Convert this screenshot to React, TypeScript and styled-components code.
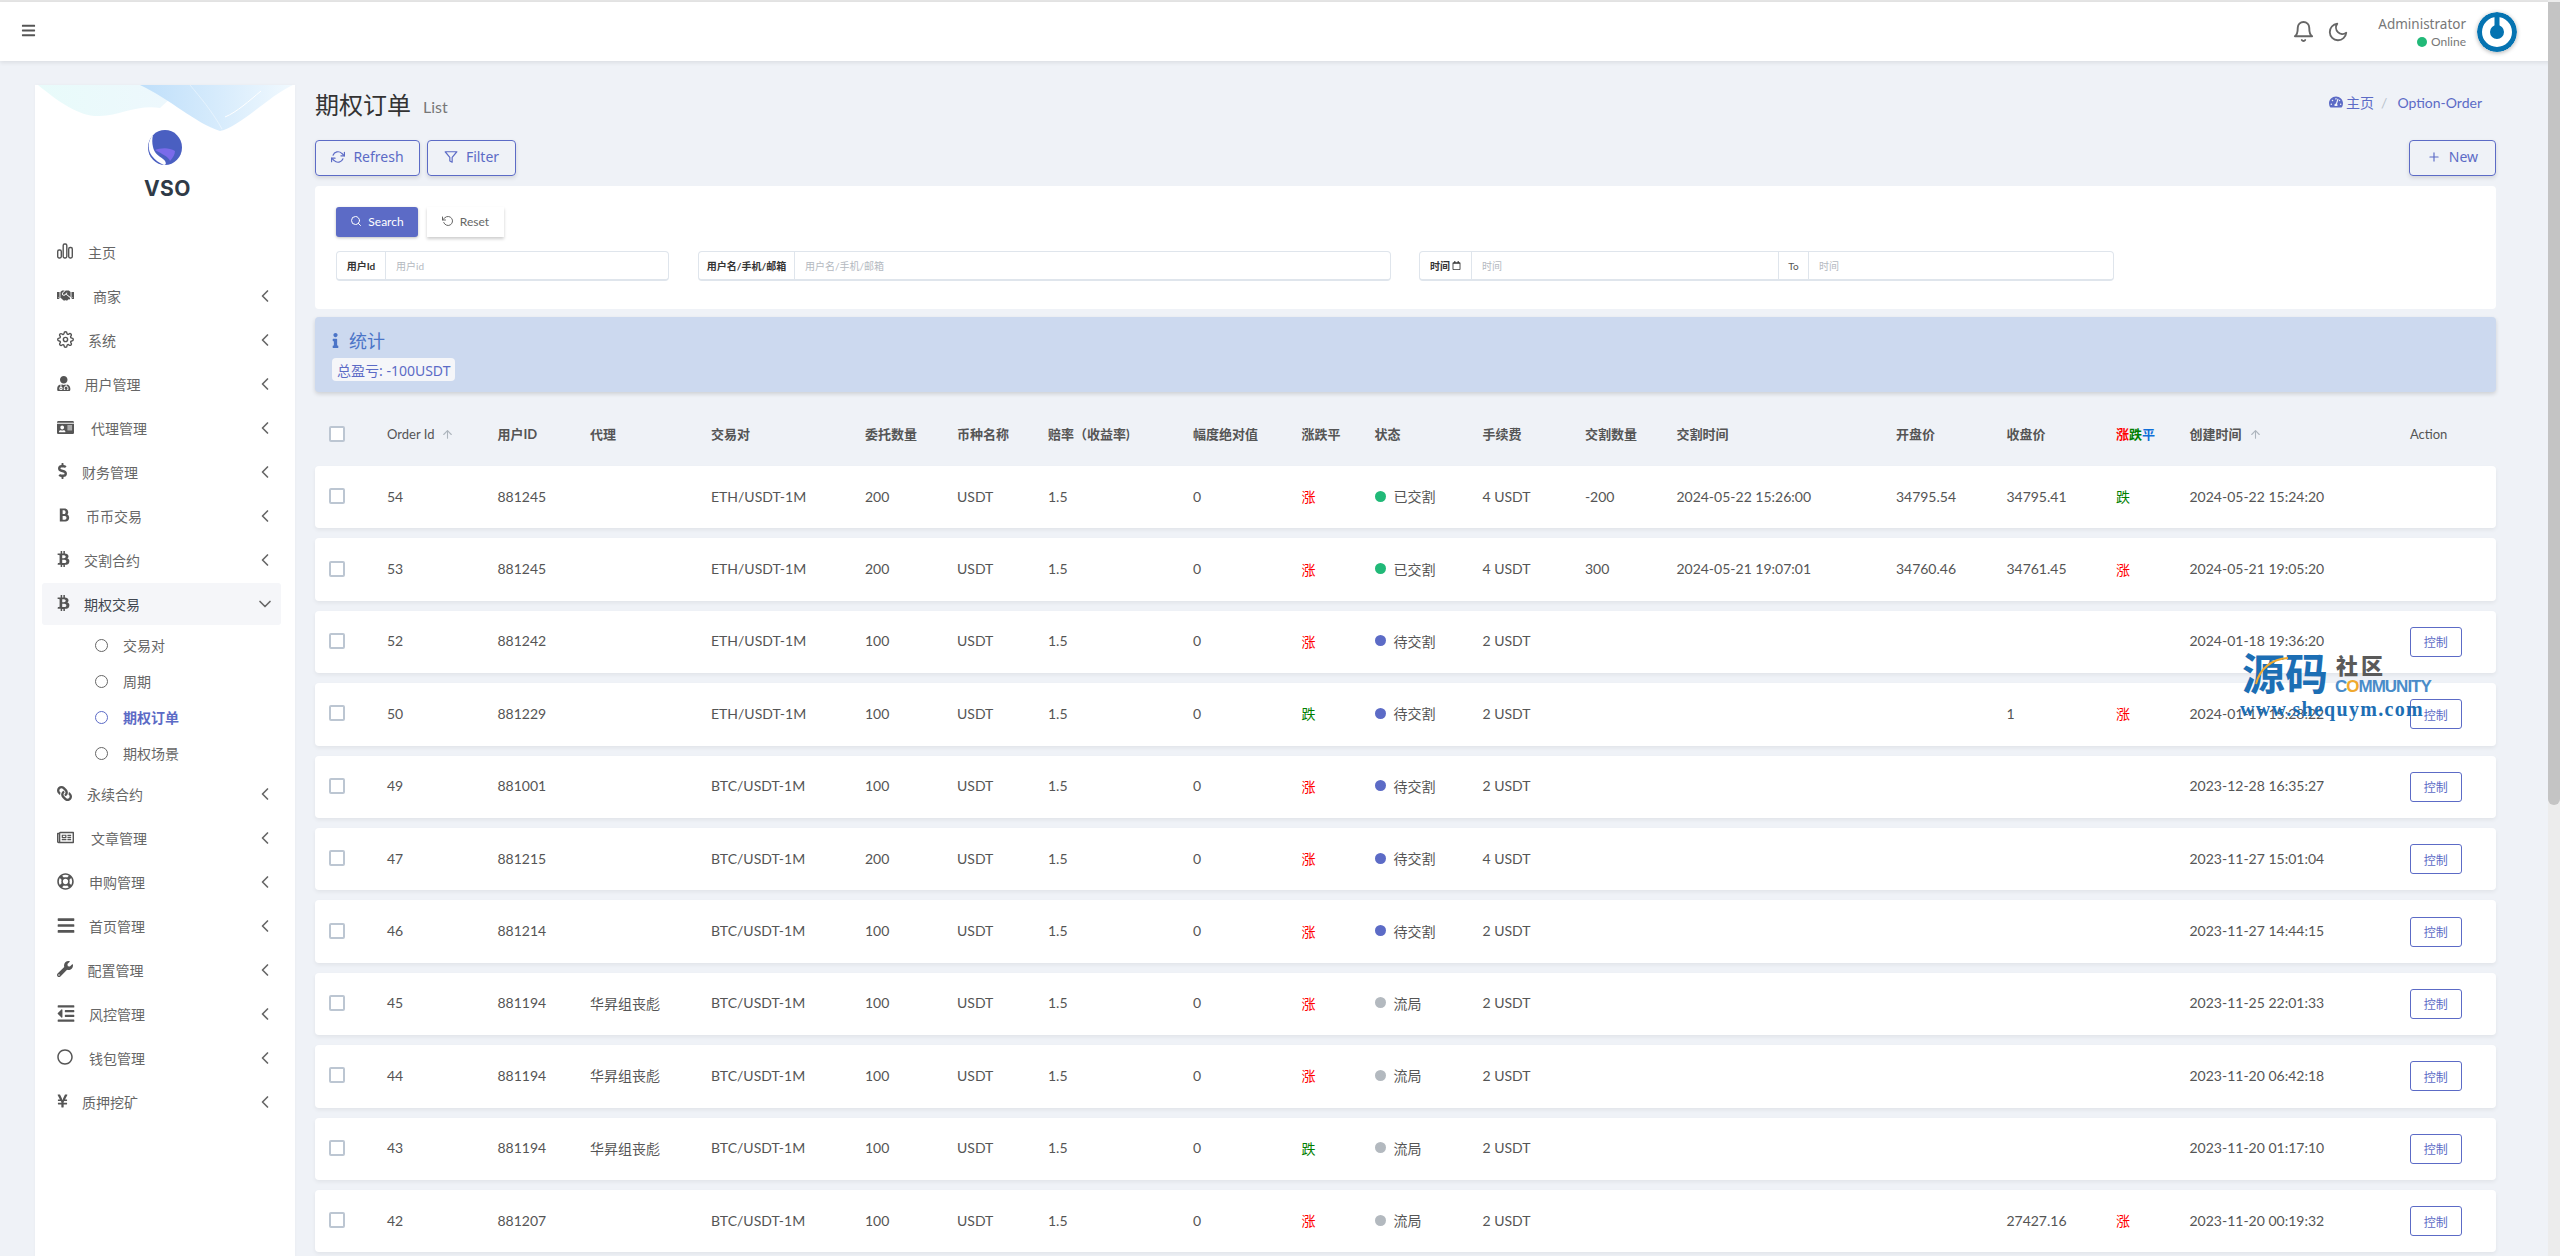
import React from 'react'
import styled, { createGlobalStyle } from 'styled-components'
import {
  FaBars,
  FaBtc,
  FaDollarSign,
  FaHandshake,
  FaIdCard,
  FaInfo,
  FaLink,
  FaRegCircle,
  FaRegLifeRing,
  FaRegNewspaper,
  FaOutdent,
  FaTachometerAlt,
  FaUserMd,
  FaWrench,
  FaYenSign,
  FaRegCalendar,
} from 'react-icons/fa'
import {
  FiArrowUp,
  FiBell,
  FiChevronDown,
  FiChevronLeft,
  FiFilter,
  FiMoon,
  FiPlus,
  FiRefreshCw,
  FiRotateCcw,
  FiSearch,
  FiSettings,
} from 'react-icons/fi'
import { ImBold } from 'react-icons/im'

const PRIMARY = '#5c6bc6'
const FONT = `"Lato", "Noto Sans CJK SC", sans-serif`
const WIDE_FONT = `"Noto Sans", "Noto Sans CJK SC", sans-serif`

const GlobalStyle = createGlobalStyle`
  html, body {
    margin: 0;
    padding: 0;
    background: #eff2f7;
    font-family: ${FONT};
    color: #414750;
  }
`

const Page = styled.div`
  position: relative;
  border-top: 2px solid #e4e4e4;
`

const ScrollTrack = styled.div`
  position: fixed;
  top: 0;
  right: 0;
  bottom: 0;
  width: 12px;
  padding-top: 2px;
  box-sizing: border-box;
  background: #ececec;
  z-index: 5;
`

const ScrollThumb = styled.div`
  height: 803px;
  background: #c4c4c4;
  border-radius: 0 0 6px 6px;
`

const TopBar = styled.header`
  height: 59px;
  background: #fff;
  box-shadow: 0 2px 4px rgba(0, 0, 0, 0.08);
  display: flex;
  align-items: center;
  padding: 0 43px 0 21px;
  position: relative;
  z-index: 2;
`

const BurgerIcon = styled(FaBars)`
  width: 15px;
  height: 15px;
  color: #555;
  margin-top: -2px;
`

const TopRight = styled.div`
  margin-left: auto;
  display: flex;
  align-items: center;
`

const TopIcon = styled.span<{ $gap: number; $size: number }>`
  display: flex;
  color: #666;
  font-size: ${({ $size }) => $size}px;
  margin-right: ${({ $gap }) => $gap}px;
`

const UserInfo = styled.div`
  display: flex;
  flex-direction: column;
  align-items: flex-end;
  margin-right: 11px;
`

const UserName = styled.span`
  font-family: ${WIDE_FONT};
  font-size: 13.5px;
  line-height: 20px;
  color: #777;
`

const UserStatus = styled.span`
  display: flex;
  align-items: center;
  gap: 4px;
  font-size: 12px;
  line-height: 16px;
  color: #777;
`

const OnlineDot = styled.i`
  width: 10px;
  height: 10px;
  border-radius: 50%;
  background: #21b978;
`

const Avatar = styled.svg`
  width: 40px;
  height: 40px;
  border-radius: 50%;
  box-shadow: 0 1px 4px rgba(0, 0, 0, 0.3);
`

const Body = styled.div`
  display: flex;
  align-items: stretch;
`

const Sidebar = styled.aside`
  width: 260px;
  flex-shrink: 0;
  margin: 24px 20px 0 35px;
  background: #fff;
  box-shadow: 0 0 4px rgba(0, 0, 0, 0.03);
  position: relative;
  overflow: hidden;
`

const Wave = styled.svg`
  position: absolute;
  left: 0;
  top: 0;
  width: 260px;
  height: 50px;
`

const Brand = styled.div`
  display: flex;
  flex-direction: column;
  align-items: center;
  padding-top: 45px;
  height: 145px;
  box-sizing: border-box;
`

const BrandName = styled.div`
  font-family: "Inter", sans-serif;
  font-size: 21px;
  font-weight: 700;
  line-height: 24px;
  margin: 12px 0 0 5px;
  color: #2f3a47;
  letter-spacing: 0.5px;
`

const Menu = styled.nav`
  padding: 0 14px 0 7px;
  margin-top: 1px;
`

const MenuItem = styled.div<{ $active?: boolean }>`
  height: 42px;
  margin-bottom: 2px;
  display: flex;
  align-items: center;
  padding: 0 6px 0 15px;
  font-size: 14px;
  color: ${({ $active }) => ($active ? '#414750' : '#666')};
  background: ${({ $active }) => ($active ? '#f5f6f9' : 'transparent')};
  border-radius: 3px;
`

const MenuIcon = styled.span<{ $box: number; $size: number }>`
  display: flex;
  width: ${({ $box }) => $box}px;
  font-size: ${({ $size }) => $size}px;
  margin-right: 14px;
  margin-top: -2px;
  color: #555;

  svg {
    width: auto;
    height: 1em;
  }
`

const Chevron = styled.span`
  margin-left: auto;
  display: flex;
  font-size: 20px;
  color: #666;
`

const SubMenu = styled.div`
  padding: 0 0 0 53px;
  margin: 0 0 2px;
`

const SubItem = styled.div<{ $active?: boolean }>`
  height: 36px;
  display: flex;
  align-items: center;
  gap: 15px;
  font-size: 14px;
  color: ${({ $active }) => ($active ? PRIMARY : '#666')};
  font-weight: ${({ $active }) => ($active ? 700 : 400)};
`

const SubDot = styled.i<{ $active?: boolean }>`
  width: 13px;
  height: 13px;
  box-sizing: border-box;
  border-radius: 50%;
  border: 1.5px solid ${({ $active }) => ($active ? PRIMARY : '#666')};
`

const MirroredLink = styled(FaLink)`
  transform: scaleX(-1);
`

const Main = styled.main`
  width: 2181px;
  flex-shrink: 0;
  padding: 31px 0 20px;
`

const TitleRow = styled.div`
  display: flex;
  align-items: flex-end;
  height: 25px;
`

const Title = styled.h1`
  margin: 0;
  font-size: 24px;
  font-weight: 400;
  line-height: 25px;
  color: #333;
`

const SubTitle = styled.span`
  margin-left: 12px;
  font-size: 16px;
  line-height: 20px;
  color: #777;
`

const Crumbs = styled.div`
  margin-left: auto;
  margin-right: 14px;
  margin-bottom: 5px;
  display: flex;
  align-items: center;
  gap: 3px;
  font-size: 14px;
  color: ${PRIMARY};
  align-self: center;
`

const CrumbSlash = styled.span`
  color: #b9c3cd;
  margin: 0 7px 0 4px;
`

const Toolbar = styled.div`
  display: flex;
  gap: 7px;
  margin-top: 23px;
`

const OutlineButton = styled.button<{ $width: number; $push?: boolean }>`
  width: ${({ $width }) => $width}px;
  height: 36px;
  box-sizing: border-box;
  border: 1px solid ${PRIMARY};
  border-radius: 4px;
  background: transparent;
  color: ${PRIMARY};
  font: 14px ${WIDE_FONT};
  display: flex;
  align-items: center;
  justify-content: center;
  gap: 8px;
  padding: 0 0 3px;
  box-shadow: 0 2px 4px rgba(0, 0, 0, 0.12);
  margin-left: ${({ $push }) => ($push ? 'auto' : '0')};
`

const FilterCard = styled.section`
  margin-top: 10px;
  height: 123px;
  box-sizing: border-box;
  padding: 21px;
  background: #fff;
  border-radius: 4px;
`

const FilterActions = styled.div`
  display: flex;
  gap: 9px;
`

const SearchButton = styled.button`
  width: 82px;
  height: 30px;
  border: 0;
  border-radius: 3px;
  background: ${PRIMARY};
  color: #fff;
  font: 12px ${FONT};
  display: flex;
  align-items: center;
  justify-content: center;
  gap: 6px;
  padding: 0 0 2px;
  box-shadow: 0 1px 3px rgba(0, 0, 0, 0.25);
`

const ResetButton = styled.button`
  width: 77px;
  height: 30px;
  border: 0;
  background: #fff;
  color: #666;
  font: 12px ${FONT};
  display: flex;
  align-items: center;
  justify-content: center;
  gap: 6px;
  padding: 0 0 2px;
  box-shadow: 0 2px 3px rgba(0, 0, 0, 0.2);
`

const FilterFields = styled.div`
  display: flex;
  margin-top: 14px;
`

const InputGroup = styled.div<{ $width: number; $gap: number }>`
  width: ${({ $width }) => $width}px;
  margin-right: ${({ $gap }) => $gap}px;
  height: 30px;
  box-sizing: border-box;
  border: 1px solid #dfe5ec;
  border-bottom-width: 2px;
  border-radius: 4px;
  display: flex;
  align-items: center;
  font-size: 10px;
`

const Addon = styled.span<{ $width: number; $plain?: boolean }>`
  width: ${({ $width }) => $width}px;
  height: 100%;
  flex-shrink: 0;
  box-sizing: border-box;
  border-right: 1px solid #dfe5ec;
  border-left: ${({ $plain }) => ($plain ? '1px solid #dfe5ec' : '0')};
  display: flex;
  align-items: center;
  justify-content: center;
  gap: 2px;
  white-space: nowrap;
  font-weight: ${({ $plain }) => ($plain ? 400 : 700)};
  color: ${({ $plain }) => ($plain ? '#555' : '#333')};
`

const Placeholder = styled.span<{ $width?: number }>`
  color: #b4b9bf;
  padding-left: 10px;
  flex: ${({ $width }) => ($width ? `0 0 ${$width}px` : '1')};
  box-sizing: border-box;
`

const StatBox = styled.section`
  margin-top: 8px;
  height: 75px;
  box-sizing: border-box;
  padding: 11px 17px;
  background: #ccd9ef;
  border-radius: 4px;
  box-shadow: 0 2px 4px rgba(0, 0, 0, 0.14);
`

const StatTitle = styled.div`
  display: flex;
  align-items: center;
  gap: 10px;
  height: 24px;
  font-size: 18px;
  color: #4b74c7;
`

const StatInfo = styled(FaInfo)`
  width: 7px;
  height: 15px;
`

const StatTag = styled.span`
  display: inline-flex;
  align-items: center;
  height: 23px;
  margin-top: 6px;
  padding: 0 5px;
  background: #f5f6f9;
  border-radius: 4px;
  font-family: ${WIDE_FONT};
  font-size: 14px;
  color: ${PRIMARY};
`

const COLUMNS =
  '72px 110.5px 92.5px 121px 154px 92px 91px 145px 108.5px 73px 108px 102.4px 91.5px 219.5px 110.5px 109.5px 73.6px 220.4px 86px'

const TableHead = styled.div`
  display: grid;
  grid-template-columns: ${COLUMNS};
  align-items: center;
  height: 74px;
  box-sizing: border-box;
  padding-top: 9px;
  font-size: 13px;
  font-weight: 700;
  color: #555;
`

const TableBody = styled.div`
  display: flex;
  flex-direction: column;
  gap: 10px;
`

const Row = styled.div`
  display: grid;
  grid-template-columns: ${COLUMNS};
  align-items: center;
  height: 62.4px;
  box-sizing: border-box;
  padding-bottom: 2px;
  background: #fff;
  border-radius: 4px;
  box-shadow: 0 2px 4px rgba(0, 0, 0, 0.06);
  font-size: 14px;
  color: #555;
`

const CheckCell = styled.span`
  padding-left: 14px;
  display: flex;
`

const CheckBox = styled.i`
  width: 16px;
  height: 16px;
  box-sizing: border-box;
  border: 2px solid #bcc6d2;
  border-radius: 2px;
  background: #fff;
`

const Plain = styled.span`
  font-weight: 400;
`

const SortArrow = styled(FiArrowUp)`
  color: #adb5bd;
  font-size: 13px;
  margin-left: 7px;
  vertical-align: -2px;
`

const Trend = styled.span<{ $color: string }>`
  color: ${({ $color }) => $color};
`

const Status = styled.span`
  display: flex;
  align-items: center;
  gap: 8px;
`

const StatusDot = styled.i<{ $color: string }>`
  width: 11px;
  height: 11px;
  border-radius: 50%;
  background: ${({ $color }) => $color};
`

const ControlButton = styled.button`
  width: 52px;
  height: 30px;
  box-sizing: border-box;
  border: 1px solid ${PRIMARY};
  border-radius: 3px;
  background: #fff;
  color: ${PRIMARY};
  font: 12px ${FONT};
  padding: 0;
  margin-top: 2px;
  display: block;
`

const Watermark = styled.div`
  position: absolute;
  left: 2240px;
  top: 648px;
  width: 200px;
  height: 72px;
  pointer-events: none;
  z-index: 3;
`

const WatermarkBig = styled.span`
  position: absolute;
  left: 2px;
  top: 0;
  font-size: 43px;
  line-height: 48px;
  font-weight: 700;
  color: #1c6eb4;
  white-space: nowrap;
`

const WatermarkSmall = styled.span`
  position: absolute;
  left: 96px;
  top: 3px;
  font-size: 22px;
  line-height: 26px;
  font-weight: 900;
  letter-spacing: 3px;
  color: #5a5a5a;
  white-space: nowrap;
`

const WatermarkWord = styled.span`
  position: absolute;
  left: 95px;
  top: 27px;
  font-family: "Liberation Sans", sans-serif;
  font-size: 17px;
  line-height: 20px;
  font-weight: 700;
  letter-spacing: -1px;
  color: #4a8cc9;
  white-space: nowrap;
`

const WatermarkO = styled.span`
  color: #f0a92e;
`

const WatermarkUrl = styled.span`
  position: absolute;
  left: 0;
  top: 47px;
  font-family: "Liberation Serif", serif;
  font-size: 20px;
  line-height: 24px;
  font-weight: 700;
  letter-spacing: 1.3px;
  color: #1c6eb4;
  white-space: nowrap;
`

const WatermarkArc = styled.svg`
  position: absolute;
  left: 14px;
  top: 6px;
  width: 36px;
  height: 30px;
`

const BarsIcon = () => (
  <svg viewBox="0 0 16 16" fill="none" stroke="currentColor" strokeWidth="1.4">
    <rect x="0.7" y="7" width="3.6" height="8" rx="1.4" />
    <rect x="6.2" y="1" width="3.6" height="14" rx="1.4" />
    <rect x="11.7" y="4.5" width="3.6" height="10.5" rx="1.4" />
  </svg>
)

const LogoIcon = () => (
  <svg width="34" height="35" viewBox="0 0 34 35">
    <ellipse cx="17" cy="17.5" rx="17" ry="17.5" fill="#4a5fc1" />
    <path d="M5 5C0 10-1 20 4 26c3 4 7 7 12 9 3 0 2-4-1-6-4-3-9-6-10-12C4 13 4 9 5 5z" fill="#fff" />
    <path d="M7 20c5-2 14-3 20 1 0 3-2 7-5 10-1-4-8-7-15-11z" fill="#7a6bea" />
  </svg>
)

const WaveArt = () => (
  <Wave viewBox="0 0 260 50" preserveAspectRatio="none">
    <defs>
      <linearGradient id="waveBlue" x1="0" y1="0" x2="1" y2="0">
        <stop offset="0" stopColor="#bfdffa" />
        <stop offset="0.5" stopColor="#d6ebfc" />
        <stop offset="1" stopColor="#f1f9fe" />
      </linearGradient>
      <linearGradient id="waveTeal" x1="0" y1="0" x2="1" y2="0">
        <stop offset="0" stopColor="#e8fbfa" />
        <stop offset="1" stopColor="#eef7fd" />
      </linearGradient>
    </defs>
    <path d="M3 0C25 18 45 32 65 31c20-1 40-12 60-8L150 0z" fill="url(#waveTeal)" />
    <path d="M105 0c30 14 55 38 80 46 20-4 50-36 73-46z" fill="url(#waveBlue)" />
    <path d="M190 32c12-5 24-16 36-26" stroke="#fff" strokeWidth="1" fill="none" />
    <path d="M155 0c10 12 22 26 32 44" stroke="#fff" strokeWidth="0.6" fill="none" opacity="0.7" />
  </Wave>
)

type NavEntry = { label: string; icon: React.ReactNode; box: number; size: number }

const NAV_TOP: NavEntry[] = [
  { label: '商家', icon: <FaHandshake />, box: 22, size: 17 },
  { label: '系统', icon: <FiSettings />, box: 17, size: 17 },
  { label: '用户管理', icon: <FaUserMd />, box: 13.5, size: 15 },
  { label: '代理管理', icon: <FaIdCard />, box: 20, size: 17 },
  { label: '财务管理', icon: <FaDollarSign />, box: 11, size: 16 },
  { label: '币币交易', icon: <ImBold />, box: 15, size: 16 },
  { label: '交割合约', icon: <FaBtc />, box: 13, size: 16 },
]

const NAV_BOTTOM: NavEntry[] = [
  { label: '永续合约', icon: <MirroredLink />, box: 16, size: 15 },
  { label: '文章管理', icon: <FaRegNewspaper />, box: 20, size: 17 },
  { label: '申购管理', icon: <FaRegLifeRing />, box: 18, size: 17 },
  { label: '首页管理', icon: <FaBars />, box: 18, size: 19 },
  { label: '配置管理', icon: <FaWrench />, box: 16.5, size: 16 },
  { label: '风控管理', icon: <FaOutdent />, box: 18, size: 19 },
  { label: '钱包管理', icon: <FaRegCircle />, box: 18, size: 16 },
  { label: '质押挖矿', icon: <FaYenSign />, box: 11, size: 16 },
]

type Order = {
  id: number
  user: string
  agent?: string
  pair: string
  qty: number
  trend: '涨' | '跌'
  status: '已交割' | '待交割' | '流局'
  fee: number
  settled?: string
  settledAt?: string
  open?: string
  close?: string
  result?: '涨' | '跌'
  created: string
}

const AGENT = '华昇组丧彪'

const ORDERS: Order[] = [
  { id: 54, user: '881245', pair: 'ETH/USDT-1M', qty: 200, trend: '涨', status: '已交割', fee: 4, settled: '-200', settledAt: '2024-05-22 15:26:00', open: '34795.54', close: '34795.41', result: '跌', created: '2024-05-22 15:24:20' },
  { id: 53, user: '881245', pair: 'ETH/USDT-1M', qty: 200, trend: '涨', status: '已交割', fee: 4, settled: '300', settledAt: '2024-05-21 19:07:01', open: '34760.46', close: '34761.45', result: '涨', created: '2024-05-21 19:05:20' },
  { id: 52, user: '881242', pair: 'ETH/USDT-1M', qty: 100, trend: '涨', status: '待交割', fee: 2, created: '2024-01-18 19:36:20' },
  { id: 50, user: '881229', pair: 'ETH/USDT-1M', qty: 100, trend: '跌', status: '待交割', fee: 2, close: '1', result: '涨', created: '2024-01-17 15:28:22' },
  { id: 49, user: '881001', pair: 'BTC/USDT-1M', qty: 100, trend: '涨', status: '待交割', fee: 2, created: '2023-12-28 16:35:27' },
  { id: 47, user: '881215', pair: 'BTC/USDT-1M', qty: 200, trend: '涨', status: '待交割', fee: 4, created: '2023-11-27 15:01:04' },
  { id: 46, user: '881214', pair: 'BTC/USDT-1M', qty: 100, trend: '涨', status: '待交割', fee: 2, created: '2023-11-27 14:44:15' },
  { id: 45, user: '881194', agent: AGENT, pair: 'BTC/USDT-1M', qty: 100, trend: '涨', status: '流局', fee: 2, created: '2023-11-25 22:01:33' },
  { id: 44, user: '881194', agent: AGENT, pair: 'BTC/USDT-1M', qty: 100, trend: '涨', status: '流局', fee: 2, created: '2023-11-20 06:42:18' },
  { id: 43, user: '881194', agent: AGENT, pair: 'BTC/USDT-1M', qty: 100, trend: '跌', status: '流局', fee: 2, created: '2023-11-20 01:17:10' },
  { id: 42, user: '881207', pair: 'BTC/USDT-1M', qty: 100, trend: '涨', status: '流局', fee: 2, close: '27427.16', result: '涨', created: '2023-11-20 00:19:32' },
]

const STATUS_COLORS: Record<Order['status'], string> = {
  已交割: '#21b978',
  待交割: '#5c6bc6',
  流局: '#b3b9bf',
}

const TREND_COLORS = { 涨: '#ff0000', 跌: '#008000' }

const NavRow: React.FC<NavEntry> = ({ label, icon, box, size }) => (
  <MenuItem>
    <MenuIcon $box={box} $size={size}>
      {icon}
    </MenuIcon>
    {label}
    <Chevron>
      <FiChevronLeft />
    </Chevron>
  </MenuItem>
)

const App: React.FC = () => (
  <Page>
    <GlobalStyle />
    <TopBar>
      <BurgerIcon />
      <TopRight>
        <TopIcon $gap={12} $size={23}>
          <FiBell />
        </TopIcon>
        <TopIcon $gap={29} $size={22}>
          <FiMoon />
        </TopIcon>
        <UserInfo>
          <UserName>Administrator</UserName>
          <UserStatus>
            <OnlineDot />
            Online
          </UserStatus>
        </UserInfo>
        <Avatar viewBox="0 0 40 40">
          <circle cx="20" cy="20" r="20" fill="#0573b1" />
          <circle cx="20" cy="20" r="11" fill="none" stroke="#fff" strokeWidth="8" />
          <rect x="17.5" y="3" width="5" height="17" rx="2.5" fill="#0573b1" />
        </Avatar>
      </TopRight>
    </TopBar>

    <Body>
      <Sidebar>
        <WaveArt />
        <Brand>
          <LogoIcon />
          <BrandName>VSO</BrandName>
        </Brand>
        <Menu>
          <MenuItem>
            <MenuIcon $box={17} $size={16}>
              <BarsIcon />
            </MenuIcon>
            主页
          </MenuItem>
          {NAV_TOP.map((n) => (
            <NavRow key={n.label} {...n} />
          ))}
          <MenuItem $active>
            <MenuIcon $box={13} $size={16}>
              <FaBtc />
            </MenuIcon>
            期权交易
            <Chevron>
              <FiChevronDown />
            </Chevron>
          </MenuItem>
          <SubMenu>
            <SubItem>
              <SubDot />
              交易对
            </SubItem>
            <SubItem>
              <SubDot />
              周期
            </SubItem>
            <SubItem $active>
              <SubDot $active />
              期权订单
            </SubItem>
            <SubItem>
              <SubDot />
              期权场景
            </SubItem>
          </SubMenu>
          {NAV_BOTTOM.map((n) => (
            <NavRow key={n.label} {...n} />
          ))}
        </Menu>
      </Sidebar>

      <Main>
        <TitleRow>
          <Title>期权订单</Title>
          <SubTitle>List</SubTitle>
          <Crumbs>
            <FaTachometerAlt />
            主页
            <CrumbSlash>/</CrumbSlash>
            Option-Order
          </Crumbs>
        </TitleRow>

        <Toolbar>
          <OutlineButton $width={105}>
            <FiRefreshCw />
            Refresh
          </OutlineButton>
          <OutlineButton $width={89}>
            <FiFilter />
            Filter
          </OutlineButton>
          <OutlineButton $width={87} $push>
            <FiPlus />
            New
          </OutlineButton>
        </Toolbar>

        <FilterCard>
          <FilterActions>
            <SearchButton>
              <FiSearch />
              Search
            </SearchButton>
            <ResetButton>
              <FiRotateCcw />
              Reset
            </ResetButton>
          </FilterActions>
          <FilterFields>
            <InputGroup $width={333} $gap={29}>
              <Addon $width={49}>用户Id</Addon>
              <Placeholder>用户id</Placeholder>
            </InputGroup>
            <InputGroup $width={693} $gap={28}>
              <Addon $width={96}>用户名/手机/邮箱</Addon>
              <Placeholder>用户名/手机/邮箱</Placeholder>
            </InputGroup>
            <InputGroup $width={695} $gap={0}>
              <Addon $width={52}>
                时间 <FaRegCalendar size={9} />
              </Addon>
              <Placeholder $width={306}>时间</Placeholder>
              <Addon $width={31} $plain>
                To
              </Addon>
              <Placeholder>时间</Placeholder>
            </InputGroup>
          </FilterFields>
        </FilterCard>

        <StatBox>
          <StatTitle>
            <StatInfo />
            统计
          </StatTitle>
          <StatTag>总盈亏:&nbsp;-100USDT</StatTag>
        </StatBox>

        <TableHead>
          <CheckCell>
            <CheckBox />
          </CheckCell>
          <Plain>
            Order Id
            <SortArrow />
          </Plain>
          <span>用户ID</span>
          <span>代理</span>
          <span>交易对</span>
          <span>委托数量</span>
          <span>币种名称</span>
          <span>赔率（收益率)</span>
          <span>幅度绝对值</span>
          <span>涨跌平</span>
          <span>状态</span>
          <span>手续费</span>
          <span>交割数量</span>
          <span>交割时间</span>
          <span>开盘价</span>
          <span>收盘价</span>
          <span>
            <Trend $color="#ff0000">涨</Trend>
            <Trend $color="#008000">跌</Trend>
            <Trend $color="#0f6fd9">平</Trend>
          </span>
          <span>
            创建时间
            <SortArrow />
          </span>
          <Plain>Action</Plain>
        </TableHead>

        <TableBody>
          {ORDERS.map((o) => (
            <Row key={o.id}>
              <CheckCell>
                <CheckBox />
              </CheckCell>
              <span>{o.id}</span>
              <span>{o.user}</span>
              <span>{o.agent}</span>
              <span>{o.pair}</span>
              <span>{o.qty}</span>
              <span>USDT</span>
              <span>1.5</span>
              <span>0</span>
              <Trend $color={TREND_COLORS[o.trend]}>{o.trend}</Trend>
              <Status>
                <StatusDot $color={STATUS_COLORS[o.status]} />
                {o.status}
              </Status>
              <span>{o.fee} USDT</span>
              <span>{o.settled}</span>
              <span>{o.settledAt}</span>
              <span>{o.open}</span>
              <span>{o.close}</span>
              <span>{o.result && <Trend $color={TREND_COLORS[o.result]}>{o.result}</Trend>}</span>
              <span>{o.created}</span>
              <span>{o.status !== '已交割' && <ControlButton>控制</ControlButton>}</span>
            </Row>
          ))}
        </TableBody>
      </Main>
    </Body>

    <Watermark>
      <WatermarkBig>源码</WatermarkBig>
      <WatermarkArc viewBox="0 0 36 30">
        <path d="M2 28C6 12 18 3 34 2" fill="none" stroke="#f0a92e" strokeWidth="2" />
      </WatermarkArc>
      <WatermarkSmall>社区</WatermarkSmall>
      <WatermarkWord>
        C<WatermarkO>O</WatermarkO>MMUNITY
      </WatermarkWord>
      <WatermarkUrl>www.shequym.com</WatermarkUrl>
    </Watermark>

    <ScrollTrack>
      <ScrollThumb />
    </ScrollTrack>
  </Page>
)

export default App
